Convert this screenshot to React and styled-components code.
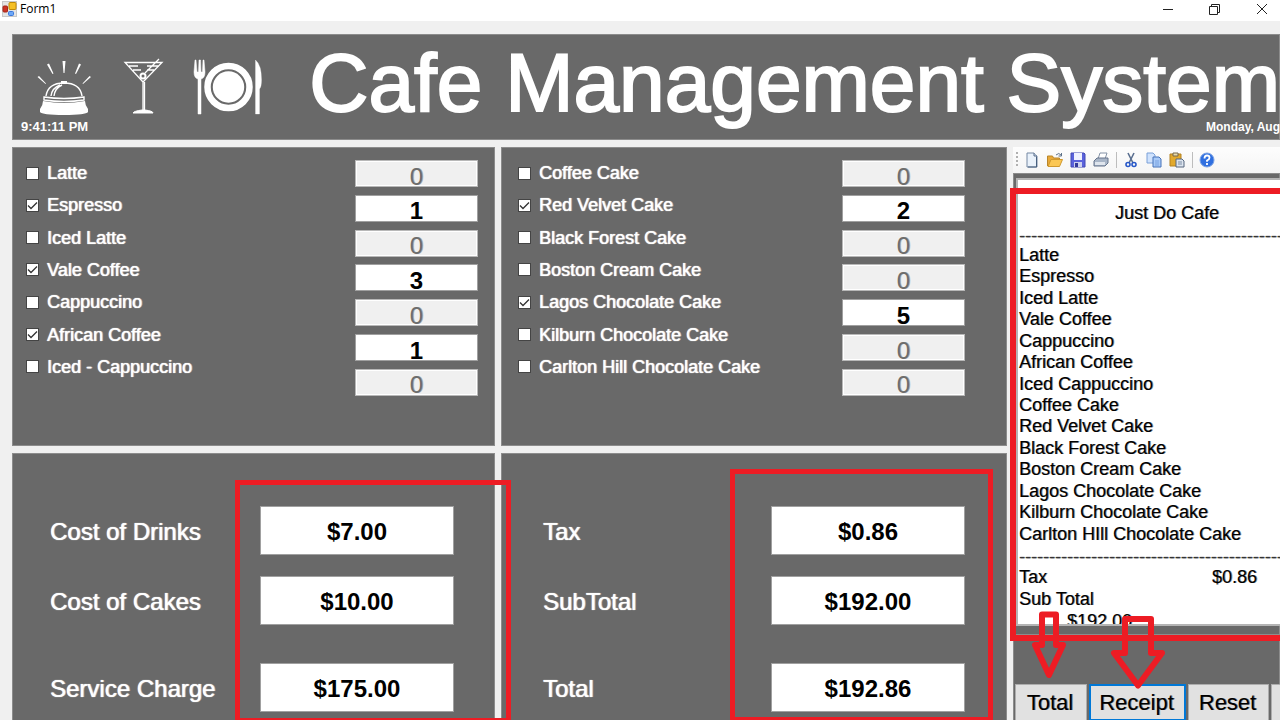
import React from "react";
import styled, { createGlobalStyle, css } from "styled-components";

const gray = "#696969";
const face = "#f0f0f0";
const red = "#ed1c24";

const GlobalStyle = createGlobalStyle`
  *, *::before, *::after { box-sizing: border-box; }
  body { margin: 0; background: ${face}; font-family: "Liberation Sans", Arial, sans-serif; }
  button, input { font-family: inherit; }
`;

const Window = styled.div`
  display: flex;
  flex-direction: column;
  height: 100vh;
  overflow: hidden;
  background: ${face};
`;

const TitleBar = styled.div`
  flex: none;
  display: flex;
  align-items: center;
  height: 21px;
  padding: 0 12px 4px 2px;
  background: #fff;
`;

const WindowTitle = styled.span`
  flex: 1;
  margin-left: 3px;
  font: 12px/16px "Open Sans", "Noto Sans", sans-serif;
  color: #000;
`;

const CaptionButtons = styled.div`
  display: flex;
  gap: 35px;
`;

const CaptionButton = styled.button`
  display: flex;
  width: 12px;
  height: 12px;
  padding: 0;
  border: 0;
  background: none;
`;

const Form = styled.main`
  flex: 1;
  display: flex;
  flex-direction: column;
  gap: 7px;
  min-height: 0;
  padding: 13px 0 0 12px;
`;

const panel = css`
  position: relative;
  background: ${gray};
  box-shadow: 0 0 0 1px #8c8c8c inset;
`;

const softWhite = css`
  color: #fff;
  text-shadow: 0 0 1px #fff, 1px 0 0 rgba(255, 255, 255, 0.5);
`;

const softBlack = css`
  color: #000;
  text-shadow: 1px 0 0 rgba(0, 0, 0, 0.45);
`;

const Header = styled.header`
  ${panel}
  flex: none;
  display: flex;
  flex-direction: column;
  height: 106px;
  color: #fff;
`;

const Banner = styled.div`
  flex: 1;
  display: flex;
  align-items: flex-start;
  justify-content: space-between;
  min-height: 0;
`;

const Logos = styled.div`
  display: flex;
  padding: 24px 0 0 24px;
`;

const Heading = styled.h1`
  margin: 0;
  font-size: 82px;
  font-weight: 400;
  line-height: 98px;
  white-space: nowrap;
  -webkit-text-stroke: 2px #fff;
`;

const HeaderFooter = styled.div`
  display: flex;
  justify-content: space-between;
  padding: 0 0 6px 9px;
  font-weight: 700;
  line-height: 14px;
`;

const Clock = styled.time`
  font-size: 13px;
`;

const Today = styled.time`
  font-size: 12px;
`;

const Columns = styled.div`
  flex: 1;
  display: grid;
  grid-template-columns: minmax(0, 483fr) minmax(0, 506fr) minmax(0, 267fr);
  gap: 6px;
  min-height: 0;
`;

const Column = styled.div`
  display: flex;
  flex-direction: column;
  gap: 7px;
  min-width: 0;
`;

const Menu = styled.section`
  ${panel}
  display: flex;
  justify-content: space-between;
  align-items: flex-start;
  height: 299px;
  padding: 10px ${(p) => p.$end}px 0 ${(p) => p.$start}px;
`;

const Choices = styled.div`
  display: grid;
  grid-auto-rows: 1fr;
  height: 226px;
`;

const Choice = styled.label`
  ${softWhite}
  display: flex;
  align-items: center;
  gap: 8px;
  font-size: 18px;
  line-height: 20px;
  white-space: nowrap;
`;

const Tick = styled.input`
  appearance: none;
  width: 13px;
  height: 13px;
  margin: 0;
  border: 1px solid #444;
  background: #fff;
  &:checked {
    background: #fff url("data:image/svg+xml,%3Csvg xmlns='http://www.w3.org/2000/svg' viewBox='0 0 11 11'%3E%3Cpath d='M1 5.5L4 8.5L10 2.5' fill='none' stroke='%23333' stroke-width='1.3'/%3E%3C/svg%3E");
  }
`;

const Amounts = styled.div`
  display: flex;
  flex-direction: column;
  justify-content: space-between;
  height: 236px;
  margin-top: 3px;
`;

const Amount = styled.input`
  width: 123px;
  height: 27px;
  padding: 6px 0 0;
  border: 1px solid #a0a0a0;
  background: #fff;
  font-size: 24px;
  font-weight: 700;
  text-align: center;
  color: #000;
  &:disabled {
    border-color: #b8b8b8;
    outline: 1px solid #fff;
    outline-offset: -2px;
    background: ${face};
    font-weight: 400;
    color: #6d6d6d;
    text-shadow: 1px 0 0 rgba(109, 109, 109, 0.5);
  }
`;

const Costs = styled.section`
  ${panel}
  flex: 1;
  padding: 53px ${(p) => p.$end}px 0 ${(p) => p.$start}px;
`;

const CostRow = styled.label`
  ${softWhite}
  display: flex;
  align-items: center;
  justify-content: space-between;
  margin-bottom: ${(p) => (p.$wide ? 39 : 22)}px;
  font-size: 24px;
`;

const CostName = styled.span`
  padding-top: 3px;
`;

const CostBox = styled.input`
  width: 194px;
  height: 49px;
  margin-bottom: -1px;
  padding: 2px 0 0;
  border: 1px solid #a0a0a0;
  background: #fff;
  font-size: 24px;
  font-weight: 700;
  text-align: center;
  color: #000;
`;

const Marker = styled.div`
  position: absolute;
  z-index: 1;
  left: ${(p) => p.$left}px;
  top: ${(p) => p.$top}px;
  width: ${(p) => p.$width}px;
  height: ${(p) => p.$height}px;
  border: ${(p) => p.$line || 5}px solid ${red};
  pointer-events: none;
`;

const Arrows = styled.svg`
  position: absolute;
  z-index: 2;
  left: 18px;
  top: 462px;
  pointer-events: none;
`;

const Side = styled.aside`
  position: relative;
  display: flex;
  flex-direction: column;
  min-width: 0;
`;

const Toolbar = styled.div`
  flex: none;
  display: flex;
  align-items: center;
  gap: 7px;
  height: 26px;
  padding-left: 3px;
  background: linear-gradient(#fdfdfd, #f5f5f5);
`;

const ToolButton = styled.button`
  flex: none;
  display: flex;
  width: 16px;
  height: 16px;
  padding: 0;
  border: 0;
  background: none;
`;

const Grip = styled.span`
  width: 2px;
  height: 16px;
  margin-right: -1px;
  background: repeating-linear-gradient(#b0b0b0 0 2px, transparent 2px 4px);
`;

const Divider = styled.span`
  width: 1px;
  height: 16px;
  margin-right: -1px;
  background: #bdbdbd;
`;

const ReceiptPanel = styled.div`
  ${panel}
  flex: none;
  height: 462px;
  padding: 5px 0 0 3px;
`;

const Receipt = styled.div`
  ${softBlack}
  height: 448px;
  overflow: hidden;
  border: 2px solid #b4b4b4;
  border-right: 0;
  background: #fff;
  padding-left: 1px;
  font-size: 18px;
  line-height: 22px;
  white-space: nowrap;
`;

const ShopName = styled.h2`
  margin: 22px 0 0 96px;
  font-size: 18px;
  font-weight: 400;
`;

const Rule = styled.div`
  height: 21px;
  line-height: 25px;
  color: #333;
`;

const ItemList = styled.ul`
  display: grid;
  grid-auto-rows: 1fr;
  height: 300px;
  margin: 0;
  padding: 0;
  line-height: 21px;
  list-style: none;
`;

const TaxLine = styled.div`
  display: flex;
  justify-content: space-between;
  padding-right: 23px;
`;

const SubTotalValue = styled.div`
  padding-left: 48px;
`;

const Actions = styled.div`
  ${panel}
  flex: 1;
  display: flex;
  align-items: flex-start;
  gap: 2px;
  padding: 49px 0 0 2px;
  overflow: hidden;
`;

const Action = styled.button`
  ${softBlack}
  flex: none;
  width: ${(p) => p.$width}px;
  height: 37px;
  padding: 0 2px 0 0;
  border: ${(p) => (p.$focused ? "2px solid #0078d7" : "1px solid #adadad")};
  background: #e1e1e1;
  font-size: 22px;
`;

const drinks = [
  ["Latte", 0], ["Espresso", 1], ["Iced Latte", 0], ["Vale Coffee", 3],
  ["Cappuccino", 0], ["African Coffee", 1], ["Iced - Cappuccino", 0],
];
const cakes = [
  ["Coffee Cake", 0], ["Red Velvet Cake", 2], ["Black Forest Cake", 0], ["Boston Cream Cake", 0],
  ["Lagos Chocolate Cake", 5], ["Kilburn Chocolate Cake", 0], ["Carlton Hill Chocolate Cake", 0],
];
const receiptItems = [
  "Latte", "Espresso", "Iced Latte", "Vale Coffee", "Cappuccino", "African Coffee", "Iced Cappuccino",
  "Coffee Cake", "Red Velvet Cake", "Black Forest Cake", "Boston Cream Cake", "Lagos Chocolate Cake",
  "Kilburn Chocolate Cake", "Carlton HIll Chocolate Cake",
];

function MenuPanel({ items, start, end }) {
  return (
    <Menu $start={start} $end={end}>
      <Choices>
        {items.map(([name, n]) => (
          <Choice key={name}><Tick type="checkbox" defaultChecked={n > 0} />{name}</Choice>
        ))}
      </Choices>
      <Amounts>
        {items.map(([name, n]) => (
          <Amount key={name} aria-label={`${name} quantity`} defaultValue={n} disabled={n === 0} />
        ))}
      </Amounts>
    </Menu>
  );
}

function CostPanel({ rows, start, end, children }) {
  return (
    <Costs $start={start} $end={end}>
      {rows.map(([name, value], i) => (
        <CostRow key={name} $wide={i === 1}><CostName>{name}</CostName><CostBox defaultValue={value} /></CostRow>
      ))}
      {children}
    </Costs>
  );
}

function FormIcon() {
  return (
    <svg width="15" height="16" viewBox="0 0 15 16">
      <rect x=".5" y=".5" width="14" height="15" fill="#e4e4e4" stroke="#c8c8c8" />
      <rect x="7" y="1.500" width="7" height="7" rx="1" fill="#f5c026" stroke="#c08a08" />
      <rect x="1" y="5" width="4.500" height="6" rx="1" fill="#cc3324" stroke="#a3261a" />
      <rect x="6.500" y="10.500" width="5" height="4" rx="1" fill="#6ea8f7" stroke="#3b78dc" />
    </svg>
  );
}

function CafeLogos() {
  return (
    <svg width="230" height="60" viewBox="36 58 230 60" fill="none" stroke="#fff">
      <g fill="#fff" stroke="none">
        <path d="M62.500 61h3l-1 12h-1zM47 64.500l2-1 4.500 10-1 .5zM81 64.500l-2-1-4 10 1 .5zM37.500 77l1.500-1 7 7.500-.5.500zM91 77l-1.500-1-7 7.500.5.500z" />
        <path d="M43 101q21 4 42 0q0 4 3 8v3q-2 3-24 3t-24-3v-3q3-4 3-8z" />
        <path d="M61 81h6v3h-6z" />
      </g>
      <path d="M46 96q2-13 18-13t18 13M44 97q20 3 40 0v3q-20 3-40 0zM51 96q1-8 9-11M54 96q1-8 8-11" strokeWidth="1.400" />
      <path d="M125 62.500h37l-19 19.500zM129 66h9M147 66h12M133 70h8M147 70h7M159 59l-14 14M143 82v29M144.500 82v29" strokeWidth="1.300" />
      <circle cx="143" cy="76" r="2.500" strokeWidth="2" />
      <path d="M133 113q1-2 9-3h3q8 1 8 3z" fill="#fff" />
      <circle cx="228.500" cy="87" r="21" strokeWidth="6.500" />
      <circle cx="228.500" cy="87" r="15.700" fill="#fff" stroke="none" />
      <path d="M195 60l-1 12q0 6 4 7v35h3V79q4-1 4-7l-1-12h-1l-.5 12h-1.500l-.5-12h-1.500l-.5 12h-1.500l-1-12z" fill="#fff" strokeWidth=".500" />
      <path d="M255.500 60q6 5 6 20 0 7-2 9v25h-4z" fill="#fff" strokeWidth=".300" />
    </svg>
  );
}

const toolIcons = {
  New: <><path d="M3 1h7l3 3v11H3z" fill="#eaf2fb" stroke="#7488a3" /><path d="M12.500 4.500v10.500H4" fill="none" stroke="#48607f" /><path d="M10 1v3h3" fill="#ccd8e8" stroke="#5a6f8c" /></>,
  Open: <><path d="M0.500 14V4h5l1 2h6v3" fill="#e8a93a" stroke="#b9862a" /><path d="M1 14.500l3-7h11.500l-3 7z" fill="#fbc754" stroke="#cf982e" /><path d="M9 3q3-3 5 0M14.500 1v3h-3" fill="none" stroke="#5c7089" /></>,
  Save: <><path d="M1 1h13l1 1v13H1z" fill="#5a62dc" stroke="#4249b4" /><path d="M4 1h8v7H4z" fill="#f0f2ff" /><path d="M4 10h8v5H4z" fill="#cdd1ee" /><path d="M5 11h3v4h-3z" fill="#33399a" /></>,
  Print: <><path d="M5 7l2-6h7l-2 6z" fill="#fff" stroke="#8492a6" /><path d="M1 9l3-3h11v5l-3 3H1z" fill="#a8b5c7" stroke="#66758c" /><path d="M2 10h10v3H2z" fill="#dfe5ed" /></>,
  Cut: <><path d="M5 1l5 10M11 1L6 11" stroke="#5a6f90" strokeWidth="1.600" fill="none" /><circle cx="5" cy="12.500" r="2" fill="none" stroke="#2858c8" strokeWidth="1.600" /><circle cx="11" cy="12.500" r="2" fill="none" stroke="#2858c8" strokeWidth="1.600" /></>,
  Copy: <><path d="M1 1h6l2 2v8H1z" fill="#cfe2fd" stroke="#7ba0d8" /><path d="M7 5h6l2 2v8H7z" fill="#a9caf8" stroke="#4672b8" /><path d="M9 9h4M9 11h4M9 13h4" stroke="#7ba3e0" /></>,
  Paste: <><path d="M1 2h11v12H1z" fill="#e2a92c" stroke="#b58222" /><path d="M4 1h5v3H4z" fill="#e8dcae" stroke="#77664a" /><path d="M7 7h6l2 2v6H7z" fill="#dce4ee" stroke="#56677e" /><path d="M9 10h4M9 12h4" stroke="#7d8ea6" /></>,
  Help: <><circle cx="8" cy="8" r="7" fill="#2f6fe0" stroke="#7ba2e4" /><path d="M5.500 6.500q0-3 2.500-3t2.500 2.300q0 1.700-2.500 2.700v1.300M8 11v2" fill="none" stroke="#fff" strokeWidth="1.800" /></>,
};

function Tool({ name }) {
  return <ToolButton aria-label={name}><svg width="16" height="16" viewBox="0 0 16 16">{toolIcons[name]}</svg></ToolButton>;
}

export default function App() {
  return (
    <Window>
      <GlobalStyle />
      <TitleBar>
        <FormIcon />
        <WindowTitle>Form1</WindowTitle>
        <CaptionButtons>
          <CaptionButton aria-label="Minimize"><svg width="12" height="12" stroke="#222"><path d="M1 6.500h10" /></svg></CaptionButton>
          <CaptionButton aria-label="Restore"><svg width="12" height="12" fill="none" stroke="#222"><path d="M.5 3.500h8v8h-8zM2.500 3.500v-2h8v8h-2" /></svg></CaptionButton>
          <CaptionButton aria-label="Close"><svg width="12" height="12" stroke="#222"><path d="M1 1l10 10M11 1L1 11" /></svg></CaptionButton>
        </CaptionButtons>
      </TitleBar>
      <Form>
        <Header>
          <Banner>
            <Logos><CafeLogos /></Logos>
            <Heading>Cafe Management System</Heading>
          </Banner>
          <HeaderFooter><Clock>9:41:11 PM</Clock><Today>Monday, Aug</Today></HeaderFooter>
        </Header>
        <Columns>
          <Column>
            <MenuPanel items={drinks} start={14} end={17} />
            <CostPanel start={38} end={41} rows={[["Cost of Drinks", "$7.00"], ["Cost of Cakes", "$10.00"], ["Service Charge", "$175.00"]]}>
              <Marker $left={223} $top={27} $width={276} $height={243} />
            </CostPanel>
          </Column>
          <Column>
            <MenuPanel items={cakes} start={17} end={42} />
            <CostPanel start={42} end={42} rows={[["Tax", "$0.86"], ["SubTotal", "$192.00"], ["Total", "$192.86"]]}>
              <Marker $left={229} $top={16} $width={263} $height={253} />
            </CostPanel>
          </Column>
          <Side>
            <Toolbar>
              <Grip />
              <Tool name="New" /><Tool name="Open" /><Tool name="Save" /><Tool name="Print" />
              <Divider />
              <Tool name="Cut" /><Tool name="Copy" /><Tool name="Paste" />
              <Divider />
              <Tool name="Help" />
            </Toolbar>
            <ReceiptPanel>
              <Receipt>
                <ShopName>Just Do Cafe</ShopName>
                <Rule>{"-".repeat(60)}</Rule>
                <ItemList>{receiptItems.map((item) => <li key={item}>{item}</li>)}</ItemList>
                <Rule>{"-".repeat(60)}</Rule>
                <TaxLine><span>Tax</span><span>$0.86</span></TaxLine>
                <div>Sub Total</div>
                <SubTotalValue>$192.00</SubTotalValue>
              </Receipt>
            </ReceiptPanel>
            <Actions>
              <Action $width={72}>Total</Action>
              <Action $width={97} $focused>Receipt</Action>
              <Action $width={81}>Reset</Action>
              <Action $width={82} aria-label="Exit" />
            </Actions>
            <Marker $left={-3} $top={41} $width={300} $height={453} $line={6} />
            <Arrows width="150" height="85" viewBox="1031 609 150 85" fill="none" stroke={red} strokeWidth="6" strokeLinejoin="round">
              <path d="M1042 614.500h14v30.500h7l-14 30-14-30h7z" />
              <path d="M1125 619h26v34h11l-24 32.500-24-32.500h11z" />
            </Arrows>
          </Side>
        </Columns>
      </Form>
    </Window>
  );
}
